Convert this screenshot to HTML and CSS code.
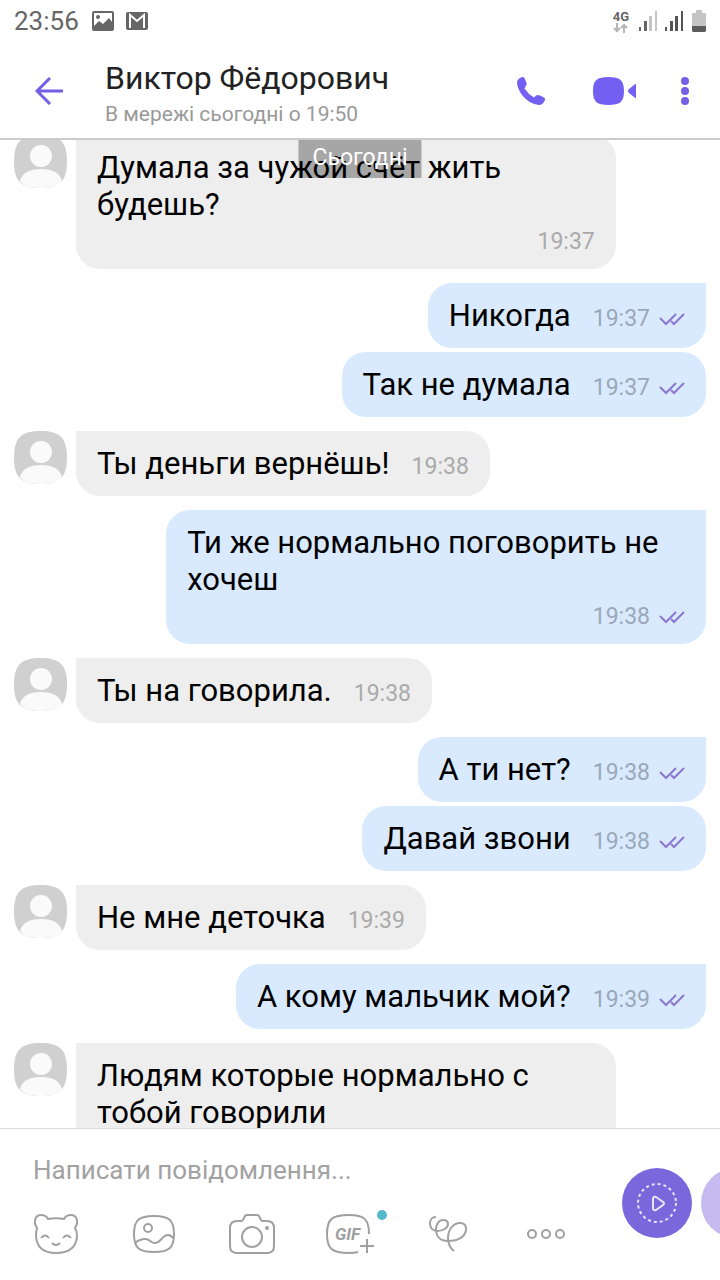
FILE: index.html
```html
<!DOCTYPE html>
<html lang="uk">
<head>
<meta charset="utf-8">
<meta name="viewport" content="width=device-width, initial-scale=1">
<title>Виктор Фёдорович</title>
<link rel="stylesheet" href="styles.css">
</head>
<body>
<svg class="defs" aria-hidden="true">
  <symbol id="avatar" viewBox="0 0 53 53">
    <path fill="#d0d0d0" d="M26.500 0C46 0 53 7 53 26.500S46 53 26.500 53 0 46 0 26.500 7 0 26.500 0z"/>
    <circle cx="27" cy="21" r="11" fill="#fafafa"/>
    <path fill="#fafafa" d="M6 46C8 38 15 34 27 34s19 4 21 12c-4 5-11 7-21.500 7S10 51 6 46z"/>
  </symbol>
  <symbol id="checks" viewBox="0 0 26 14">
    <path fill="none" stroke="#8a78d0" stroke-width="2" d="M1 6l6 6L17 2M12 9l3 3L25 2"/>
  </symbol>
</svg>
<div class="app">
  <div class="status">
    <span class="clock">23:56</span>
    <svg class="status-icon" width="22" height="20" viewBox="0 0 22 20"><path fill="#666" fill-rule="evenodd" d="M2 0h18q2 0 2 2v16q0 2-2 2H2q-2 0-2-2V2Q0 0 2 0zM2 2v13l5-5 4 3 6-6 3 4V2zM6 4a2 2 0 1 0 .1 0z"/></svg>
    <svg class="status-icon" width="22" height="18" viewBox="0 0 22 18"><rect width="22" height="18" rx="2" fill="#666"/><path fill="none" stroke="#fff" stroke-width="2" d="M4 16V3l7 6 7-6v13"/></svg>
    <span class="network">
      <span class="network-name">4G</span>
      <svg width="16" height="10" viewBox="0 0 16 10"><path fill="none" stroke="#b5b5b5" stroke-width="2" d="M4 0v8M1 5l3 3 3-3M11 10V2M8 5l3-3 3 3"/></svg>
    </span>
    <svg class="signal" width="18" height="20" viewBox="0 0 18 20"><path fill="#666" d="M0 16h2v4H0zM5 10h3v10H5z"/><path fill="#c4c4c4" d="M10 5h3v15h-3zM16 0h2v20h-2z"/></svg>
    <svg class="signal" width="18" height="20" viewBox="0 0 18 20"><path fill="#555" d="M0 16h2v4H0zM5 10h3v10H5zM10 5h3v15h-3zM16 0h2v20h-2z"/></svg>
    <svg class="battery" width="14" height="22" viewBox="0 0 14 22"><path fill="#c4c4c4" d="M4 0h6v3h3l1 1v12H0V4l1-1h3z"/><path fill="#5c5c5c" d="M0 16h14v5l-1 1H1l-1-1z"/></svg>
  </div>
  <header class="header">
    <button class="icon-button back" aria-label="Назад"><svg width="28" height="28" viewBox="0 0 28 28"><path fill="none" stroke="#7360e6" stroke-width="3" d="M28 14H2M15 1L2 14l13 13"/></svg></button>
    <div class="contact">
      <h1 class="name">Виктор Фёдорович</h1>
      <p class="presence">В мережі сьогодні о 19:50</p>
    </div>
    <button class="icon-button" aria-label="Подзвонити"><svg width="28" height="28" viewBox="0 0 28 28"><path fill="#7360f2" d="M4 .5Q6-.5 7.500 1L9.500 6Q10 8 8.500 9.500L7.500 11.500Q11 17 17 20.500L19 18.500Q21 17.500 23 18.500L27 20.500Q28.500 21.500 28 23 26 28 22 28 12 27 5 18 0 11 0 5 .5 2 4 .5z"/></svg></button>
    <button class="icon-button video" aria-label="Відеодзвінок"><svg width="43" height="28" viewBox="0 0 43 28"><path fill="#7360f2" d="M15.500 0C27 0 31 3 31 14s-4 14-15.500 14S0 25 0 14 4 0 15.500 0zM43 7v14q-1 0-2-1l-5-4q-2-2 0-4l5-4q1-1 2-1z"/></svg></button>
    <button class="icon-button more" aria-label="Більше"><svg width="8" height="28" viewBox="0 0 8 28"><g fill="#7360e6"><circle cx="4" cy="4" r="4"/><circle cx="4" cy="14" r="4"/><circle cx="4" cy="24" r="4"/></g></svg></button>
  </header>
  <main class="chat">
    <div class="day">Сьогодні</div>
    <div class="messages">
      <div class="row"><svg class="avatar"><use href="#avatar"/></svg><div class="bubble long"><p class="text">Думала за чужой счёт жить будешь?</p><span class="time">19:37</span></div></div>
      <div class="row out"><div class="bubble"><p class="text">Никогда</p><span class="time">19:37<svg class="checks"><use href="#checks"/></svg></span></div></div>
      <div class="row out next"><div class="bubble"><p class="text">Так не думала</p><span class="time">19:37<svg class="checks"><use href="#checks"/></svg></span></div></div>
      <div class="row"><svg class="avatar"><use href="#avatar"/></svg><div class="bubble"><p class="text">Ты деньги вернёшь!</p><span class="time">19:38</span></div></div>
      <div class="row out"><div class="bubble long"><p class="text">Ти же нормально поговорить не хочеш</p><span class="time">19:38<svg class="checks"><use href="#checks"/></svg></span></div></div>
      <div class="row"><svg class="avatar"><use href="#avatar"/></svg><div class="bubble"><p class="text">Ты на говорила.</p><span class="time">19:38</span></div></div>
      <div class="row out"><div class="bubble"><p class="text">А ти нет?</p><span class="time">19:38<svg class="checks"><use href="#checks"/></svg></span></div></div>
      <div class="row out next"><div class="bubble"><p class="text">Давай звони</p><span class="time">19:38<svg class="checks"><use href="#checks"/></svg></span></div></div>
      <div class="row"><svg class="avatar"><use href="#avatar"/></svg><div class="bubble"><p class="text">Не мне деточка</p><span class="time">19:39</span></div></div>
      <div class="row out"><div class="bubble"><p class="text">А кому мальчик мой?</p><span class="time">19:39<svg class="checks"><use href="#checks"/></svg></span></div></div>
      <div class="row"><svg class="avatar"><use href="#avatar"/></svg><div class="bubble long"><p class="text">Людям которые нормально с тобой говорили</p></div></div>
    </div>
  </main>
  <footer class="composer">
    <input class="field" type="text" aria-label="Повідомлення" placeholder="Написати повідомлення...">
    <div class="tools">
      <button class="tool" aria-label="Стікери"><svg width="44" height="40" viewBox="0 0 44 40"><path d="M3 14C-1 8 1 1 7 1q5 0 7 4 8-1.500 16 0 2-4 7-4c6 0 8 7 4 13Q43 17 43 22 42 39 22 39 3 39 2 22q0-4 1-8zM7 24q4-5 8 0M29 24q4-5 8 0M18 29q4 4 8 0"/></svg></button>
      <button class="tool" aria-label="Галерея"><svg width="42" height="38" viewBox="0 0 42 38"><path d="M21 1c15 0 20 4 20 18s-5 18-20 18S1 33 1 19 6 1 21 1zM2 28q5-4 10-4c6 0 5 4 10 4 6 0 7-8 13-8q3 0 6 4"/><circle cx="15" cy="13" r="4"/></svg></button>
      <button class="tool" aria-label="Камера"><svg width="46" height="40" viewBox="0 0 46 40"><path d="M8 7h4q2 0 3-3 1-3 3-3h10q2 0 3 3 1 3 3 3h4q7 0 7 7v18q0 7-7 7H8q-7 0-7-7V14q0-7 7-7z"/><circle cx="23" cy="23" r="10"/><circle cx="38" cy="14" r="1"/></svg></button>
      <button class="tool gif" aria-label="GIF"><svg width="48" height="40" viewBox="0 0 48 40"><path d="M32 38q-4 1-9 1C6 39 1 35 1 20S6 1 23 1c15 0 20 4 20 19M41 25v14M34 32h14"/><text class="gif-text" x="9" y="26">GIF</text></svg><span class="dot"></span></button>
      <button class="tool" aria-label="Каракулі"><svg width="38" height="36" viewBox="0 0 38 36"><path d="M7 1C3 1 1 4 1 7c0 5 3 8 7 8 6 0 11-3 11-7 0-3-2-4-5-4C10 4 7 8 7 13c0 8 5 12 12 12 11 0 18-5 18-12 0-4-2-6-6-6-7 0-12 7-12 15 0 6 2 10 6 13"/></svg></button>
      <button class="tool" aria-label="Ще"><svg width="38" height="10" viewBox="0 0 38 10"><circle cx="5" cy="5" r="4"/><circle cx="19" cy="5" r="4"/><circle cx="33" cy="5" r="4"/></svg></button>
    </div>
    <div class="record">
      <button class="record-button" aria-label="Відеоповідомлення"><svg width="40" height="40" viewBox="0 0 40 40"><circle cx="20" cy="20" r="19" fill="none" stroke="#e8e4fa" stroke-width="2" stroke-dasharray="3 2.970"/><path fill="none" stroke="#e8e4fa" stroke-width="2" stroke-linejoin="round" d="M16 16q0-3 3-2l7 5q2 1 0 3l-7 5q-3 1-3-2z"/></svg></button>
      <button class="record-button faded" aria-label="Голосове повідомлення"></button>
    </div>
  </footer>
</div>
</body>
</html>
```
FILE: styles.css
```css
* { box-sizing: border-box; }
body { margin: 0; background: #fff; font-family: Roboto, "Noto Sans", sans-serif; }
button { border: 0; padding: 0; background: none; font: inherit; display: flex; align-items: center; justify-content: center; }
svg { display: block; flex: none; }
.defs { position: absolute; width: 0; height: 0; }
.app { display: flex; flex-direction: column; height: 100vh; overflow: hidden; }

.status { display: flex; align-items: center; height: 42px; padding: 0 14px; color: #666; }
.clock { font-size: 26px; line-height: 42px; margin-right: 1px; }
.status-icon { margin-left: 12px; }
.network { display: flex; flex-direction: column; align-items: center; margin: 0 10px 0 auto; }
.network-name { font-size: 13px; line-height: 13px; font-weight: 700; }
.signal { margin-right: 8px; }
.battery { margin-left: 1px; }

.header { display: flex; align-items: center; height: 98px; padding: 2px 31px 0 35px; border-bottom: 2px solid #ccc; }
.back { margin-right: 42px; }
.contact { flex: 1; min-width: 0; padding-top: 8px; }
.name { margin: 0; font-size: 32px; line-height: 38px; font-weight: 400; color: #222; white-space: nowrap; }
.presence { margin: 0; font-size: 21px; line-height: 34px; color: #999; white-space: nowrap; }
.video { margin: 0 45px 0 48px; }

.chat { position: relative; flex: 1; min-height: 0; overflow: hidden; }
.day { position: absolute; z-index: 1; top: 0; left: 50%; transform: translateX(-50%); padding: 0 14px; height: 38px; font-size: 23px; line-height: 36px; color: #fff; background: rgba(0, 0, 0, .3); }
.messages { display: flex; flex-direction: column; margin-top: -5px; padding: 0 14px; }
.row { display: flex; align-items: flex-start; margin-bottom: 14px; }
.row.out { justify-content: flex-end; }
.row:has(+ .next) { margin-bottom: 4px; }
.avatar { width: 53px; height: 53px; margin-right: 9px; }
.bubble { display: flex; align-items: baseline; gap: 22px; padding: 14px 21px; border-radius: 0 24px 24px 24px; background: #eee; }
.long { flex-direction: column; gap: 5px; width: 78%; min-height: 134px; padding-bottom: 13px; }
.out .bubble { border-radius: 24px 0 24px 24px; background: #d9eaff; }
.next .bubble { border-radius: 24px; }
.text { margin: 0; font-size: 31px; line-height: 37px; color: #000; }
.time { display: flex; align-items: center; gap: 9px; font-size: 23px; line-height: 28px; color: #aaa; }
.out .time { color: #9aa8b8; }
.long .time { align-self: flex-end; }
.checks { width: 26px; height: 14px; }

.composer { position: relative; height: 152px; padding-top: 20px; border-top: 1px solid #ddd; }
.field { display: block; width: 80%; height: 42px; border: 0; padding: 0 0 0 33px; outline: 0; background: none; font: inherit; font-size: 26px; color: #222; }
.field::placeholder { color: #a2a2a2; opacity: 1; }
.tools { display: flex; padding: 18px 7px; }
.tool { position: relative; width: 98px; height: 50px; }
.tool svg { fill: none; stroke: #a0a0a0; stroke-width: 2; overflow: visible; }
.gif-text { font-size: 17px; font-weight: 700; font-style: italic; fill: #a0a0a0; stroke: none; }
.dot { position: absolute; top: 1px; right: 12px; width: 10px; height: 10px; border-radius: 50%; background: #55b9cc; }
.record { position: absolute; top: 39px; right: -51px; display: flex; gap: 9px; }
.record-button { width: 70px; height: 70px; border-radius: 50%; background: #7a67dc; }
.faded { background: #c5bbf0; }
```
